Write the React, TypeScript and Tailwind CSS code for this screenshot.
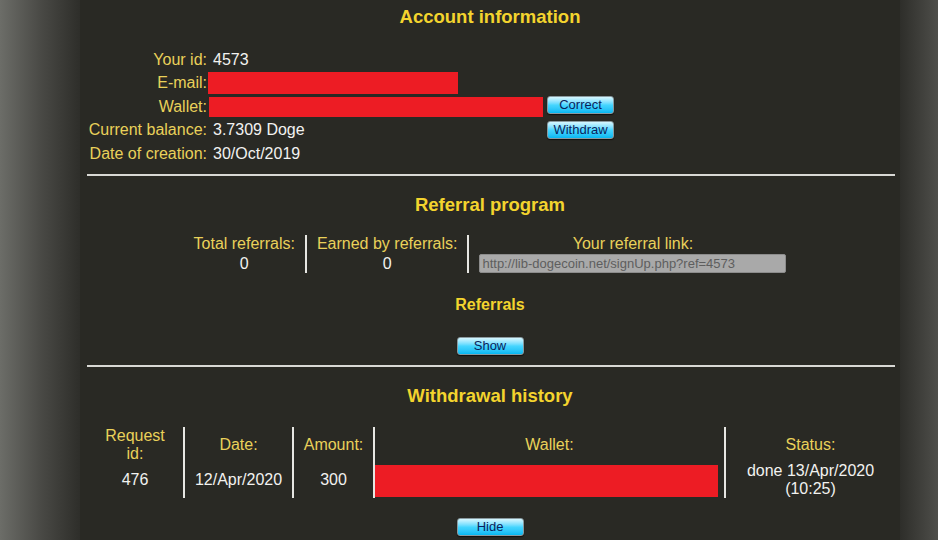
import React from 'react';

const btn =
  'h-[18px] w-[67px] rounded-[3px] border border-[#8a9aa0] bg-gradient-to-b from-[#d6f7ff] via-[#45d6ff] to-[#00b8f2] text-[13px] leading-[16px] text-[#0b1f5c] shadow-[0_1px_1px_rgba(0,0,0,0.6)]';

const Heading: React.FC<{ children: React.ReactNode; className?: string }> = ({ children, className = '' }) => (
  <h2 className={`text-center text-[18.5px] leading-[22px] font-bold text-[#f3d42e] ${className}`}>{children}</h2>
);

const Rule: React.FC<{ className?: string }> = ({ className = '' }) => (
  <div className={`ml-[7px] mr-[5px] h-[2px] bg-[#d8d8d4] ${className}`}></div>
);

const App: React.FC = () => {
  const label = 'text-right text-[#e9d15a] pr-[1px]';

  return (
    <div className="flex h-[540px] w-full overflow-hidden font-['Liberation_Sans',Arial,sans-serif] text-[16px] leading-[18px]">
      <div className="w-[80px] shrink-0 bg-gradient-to-r from-[#6c6d68] via-[#4a4a46] to-[#2e2e2a]"></div>

      <main className="flex-1 bg-[#292924] text-[#f2f2f0]">
        <Heading className="mt-[6px]">Account information</Heading>

        <div className="mt-[20px] grid grid-cols-[128px_339px_auto] items-center">
          <div className={`${label} h-[23px] leading-[23px]`}>Your id:</div>
          <div className="pl-[5px]">4573</div>
          <div></div>

          <div className={`${label} h-[24px] leading-[24px]`}>E-mail:</div>
          <div className="h-[22px] w-[250px] bg-[#ed1c24]"></div>
          <div></div>

          <div className={`${label} h-[23px] leading-[23px]`}>Wallet:</div>
          <div className="h-[20px] w-[334px] bg-[#ed1c24] ml-[1px]"></div>
          <div className="self-start"><button className={btn}>Correct</button></div>

          <div className={`${label} h-[24px] leading-[24px]`}>Current balance:</div>
          <div className="pl-[5px]">3.7309 Doge</div>
          <div className="self-start mt-[2px]"><button className={btn}>Withdraw</button></div>

          <div className={`${label} h-[24px] leading-[24px]`}>Date of creation:</div>
          <div className="pl-[5px]">30/Oct/2019</div>
          <div></div>
        </div>

        <Rule className="mt-[8px]" />

        <Heading className="mt-[18px]">Referral program</Heading>

        <div className="mt-[19px] flex justify-center">
          <div className="px-[10px] text-center">
            <div className="text-[#e9d15a]">Total referrals:</div>
            <div className="mt-[2px]">0</div>
          </div>
          <div className="w-[2px] bg-[#e6e6e2]"></div>
          <div className="px-[10px] text-center">
            <div className="text-[#e9d15a]">Earned by referrals:</div>
            <div className="mt-[2px]">0</div>
          </div>
          <div className="w-[2px] bg-[#e6e6e2]"></div>
          <div className="px-[10px] text-center">
            <div className="text-[#e9d15a]">Your referral link:</div>
            <input
              readOnly
              value="http://lib-dogecoin.net/signUp.php?ref=4573"
              className="mt-[1px] h-[19px] w-[307px] rounded-[2px] border border-[#8c8c8c] bg-[#a9a9a9] px-[2px] text-[13px] leading-[17px] text-[#5e5e5e] outline-none"
            />
          </div>
        </div>

        <h3 className="mt-[22px] text-center text-[16px] leading-[20px] font-bold text-[#f3d42e]">Referrals</h3>

        <div className="mt-[22px] flex justify-center">
          <button className={btn}>Show</button>
        </div>

        <Rule className="mt-[10px]" />

        <Heading className="mt-[18px]">Withdrawal history</Heading>

        <div className="mt-[20px] ml-[7px] mr-[5px] grid grid-cols-[96px_109px_81px_351px_1fr] grid-rows-[35px_36px] text-center">
          <div className="flex flex-col justify-center text-[#e9d15a]">Request<br />id:</div>
          <div className="flex items-center justify-center border-l-2 border-[#e6e6e2] text-[#e9d15a]">Date:</div>
          <div className="flex items-center justify-center border-l-2 border-[#e6e6e2] text-[#e9d15a]">Amount:</div>
          <div className="flex items-center justify-center border-l-2 border-[#e6e6e2] text-[#e9d15a]">Wallet:</div>
          <div className="flex items-center justify-center border-l-2 border-[#e6e6e2] text-[#e9d15a]">Status:</div>

          <div className="flex items-center justify-center">476</div>
          <div className="flex items-center justify-center border-l-2 border-[#e6e6e2]">12/Apr/2020</div>
          <div className="flex items-center justify-center border-l-2 border-[#e6e6e2]">300</div>
          <div className="flex items-start border-l-2 border-[#e6e6e2] pt-[3px] pr-[6px]">
            <div className="h-[32px] w-full bg-[#ed1c24]"></div>
          </div>
          <div className="flex flex-col justify-center border-l-2 border-[#e6e6e2]">
            <div>done 13/Apr/2020</div>
            <div>(10:25)</div>
          </div>
        </div>

        <div className="mt-[20px] flex justify-center">
          <button className={btn}>Hide</button>
        </div>
      </main>

      <div className="w-[38px] shrink-0 bg-gradient-to-r from-[#2e2e2a] to-[#4e4e4a]"></div>
    </div>
  );
};

export default App;
